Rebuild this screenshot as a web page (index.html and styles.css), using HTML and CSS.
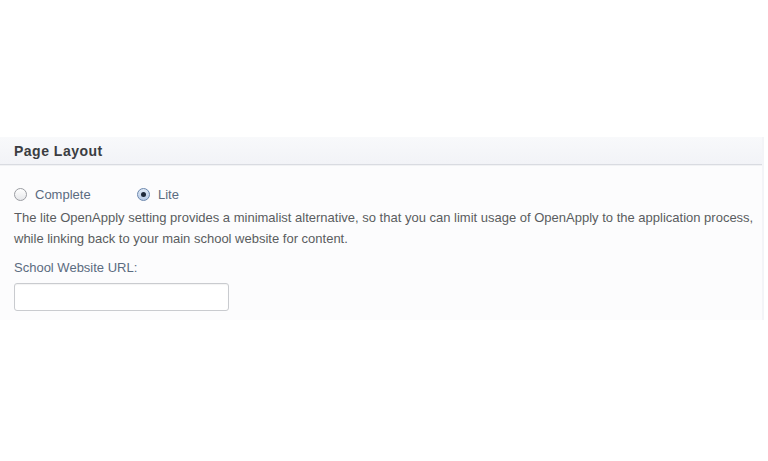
FILE: index.html
```html
<!DOCTYPE html>
<html>
<head>
<meta charset="utf-8">
<link rel="stylesheet" href="styles.css">
</head>
<body>
<div class="page">
  <section class="panel">
    <div class="panel-head">Page Layout</div>
    <div class="panel-body">
      <div class="radios">
        <label class="opt"><span class="radio"></span>Complete</label>
        <label class="opt"><span class="radio checked"></span>Lite</label>
      </div>
      <p class="desc">The lite OpenApply setting provides a minimalist alternative, so that you can limit usage of OpenApply to the application process, while linking back to your main school website for content.</p>
      <div class="field-label">School Website URL:</div>
      <div class="input"></div>
    </div>
  </section>
</div>
</body>
</html>
```

FILE: styles.css
```css
html, body {
  margin: 0;
  padding: 0;
  background: #ffffff;
}
body {
  font-family: "Liberation Sans", Arial, sans-serif;
  width: 768px;
  height: 461px;
  overflow: hidden;
}
.page {
  padding-top: 137px;
}
.panel {
  width: 762px;
  background: #fcfcfd;
  border-right: 2px solid #f3f4f7;
}
.panel-head {
  height: 27px;
  line-height: 29px;
  padding-left: 14px;
  font-size: 14px;
  letter-spacing: 0.5px;
  font-weight: bold;
  color: #3b3d42;
  background: linear-gradient(#f8f9fb, #f2f3f7);
  border-bottom: 1px solid #d9dbe1;
  box-shadow: 0 1px 0 #f1f2f4;
}
.panel-body {
  padding: 21px 2px 9px 14px;
}
.radios {
  display: flex;
  height: 16px;
  align-items: center;
}
.opt {
  display: flex;
  align-items: center;
  font-size: 13px;
  color: #5b6b80;
  width: 123px;
}
.radio {
  width: 11px;
  height: 11px;
  border-radius: 50%;
  border: 1px solid #9a9ca2;
  background: linear-gradient(#ffffff, #e6e7ea);
  margin-right: 8px;
  box-sizing: content-box;
  position: relative;
}
.radio.checked {
  border-color: #6b87ad;
  background: linear-gradient(#dfe9f6, #b8cbe6);
}
.radio.checked::after {
  content: "";
  position: absolute;
  left: 3px;
  top: 3px;
  width: 5px;
  height: 5px;
  border-radius: 50%;
  background: #1f2a3a;
}
.desc {
  margin: 5px 0 0 0;
  font-size: 13px;
  line-height: 21px;
  color: #5a5c60;
}
.field-label {
  margin-top: 11px;
  font-size: 13px;
  line-height: 16px;
  color: #5b6b80;
}
.input {
  margin-top: 7px;
  width: 213px;
  height: 26px;
  background: #ffffff;
  border: 1px solid #c9cbcf;
  border-radius: 3px;
  box-shadow: inset 0 1px 1px rgba(0,0,0,0.05);
}
```
